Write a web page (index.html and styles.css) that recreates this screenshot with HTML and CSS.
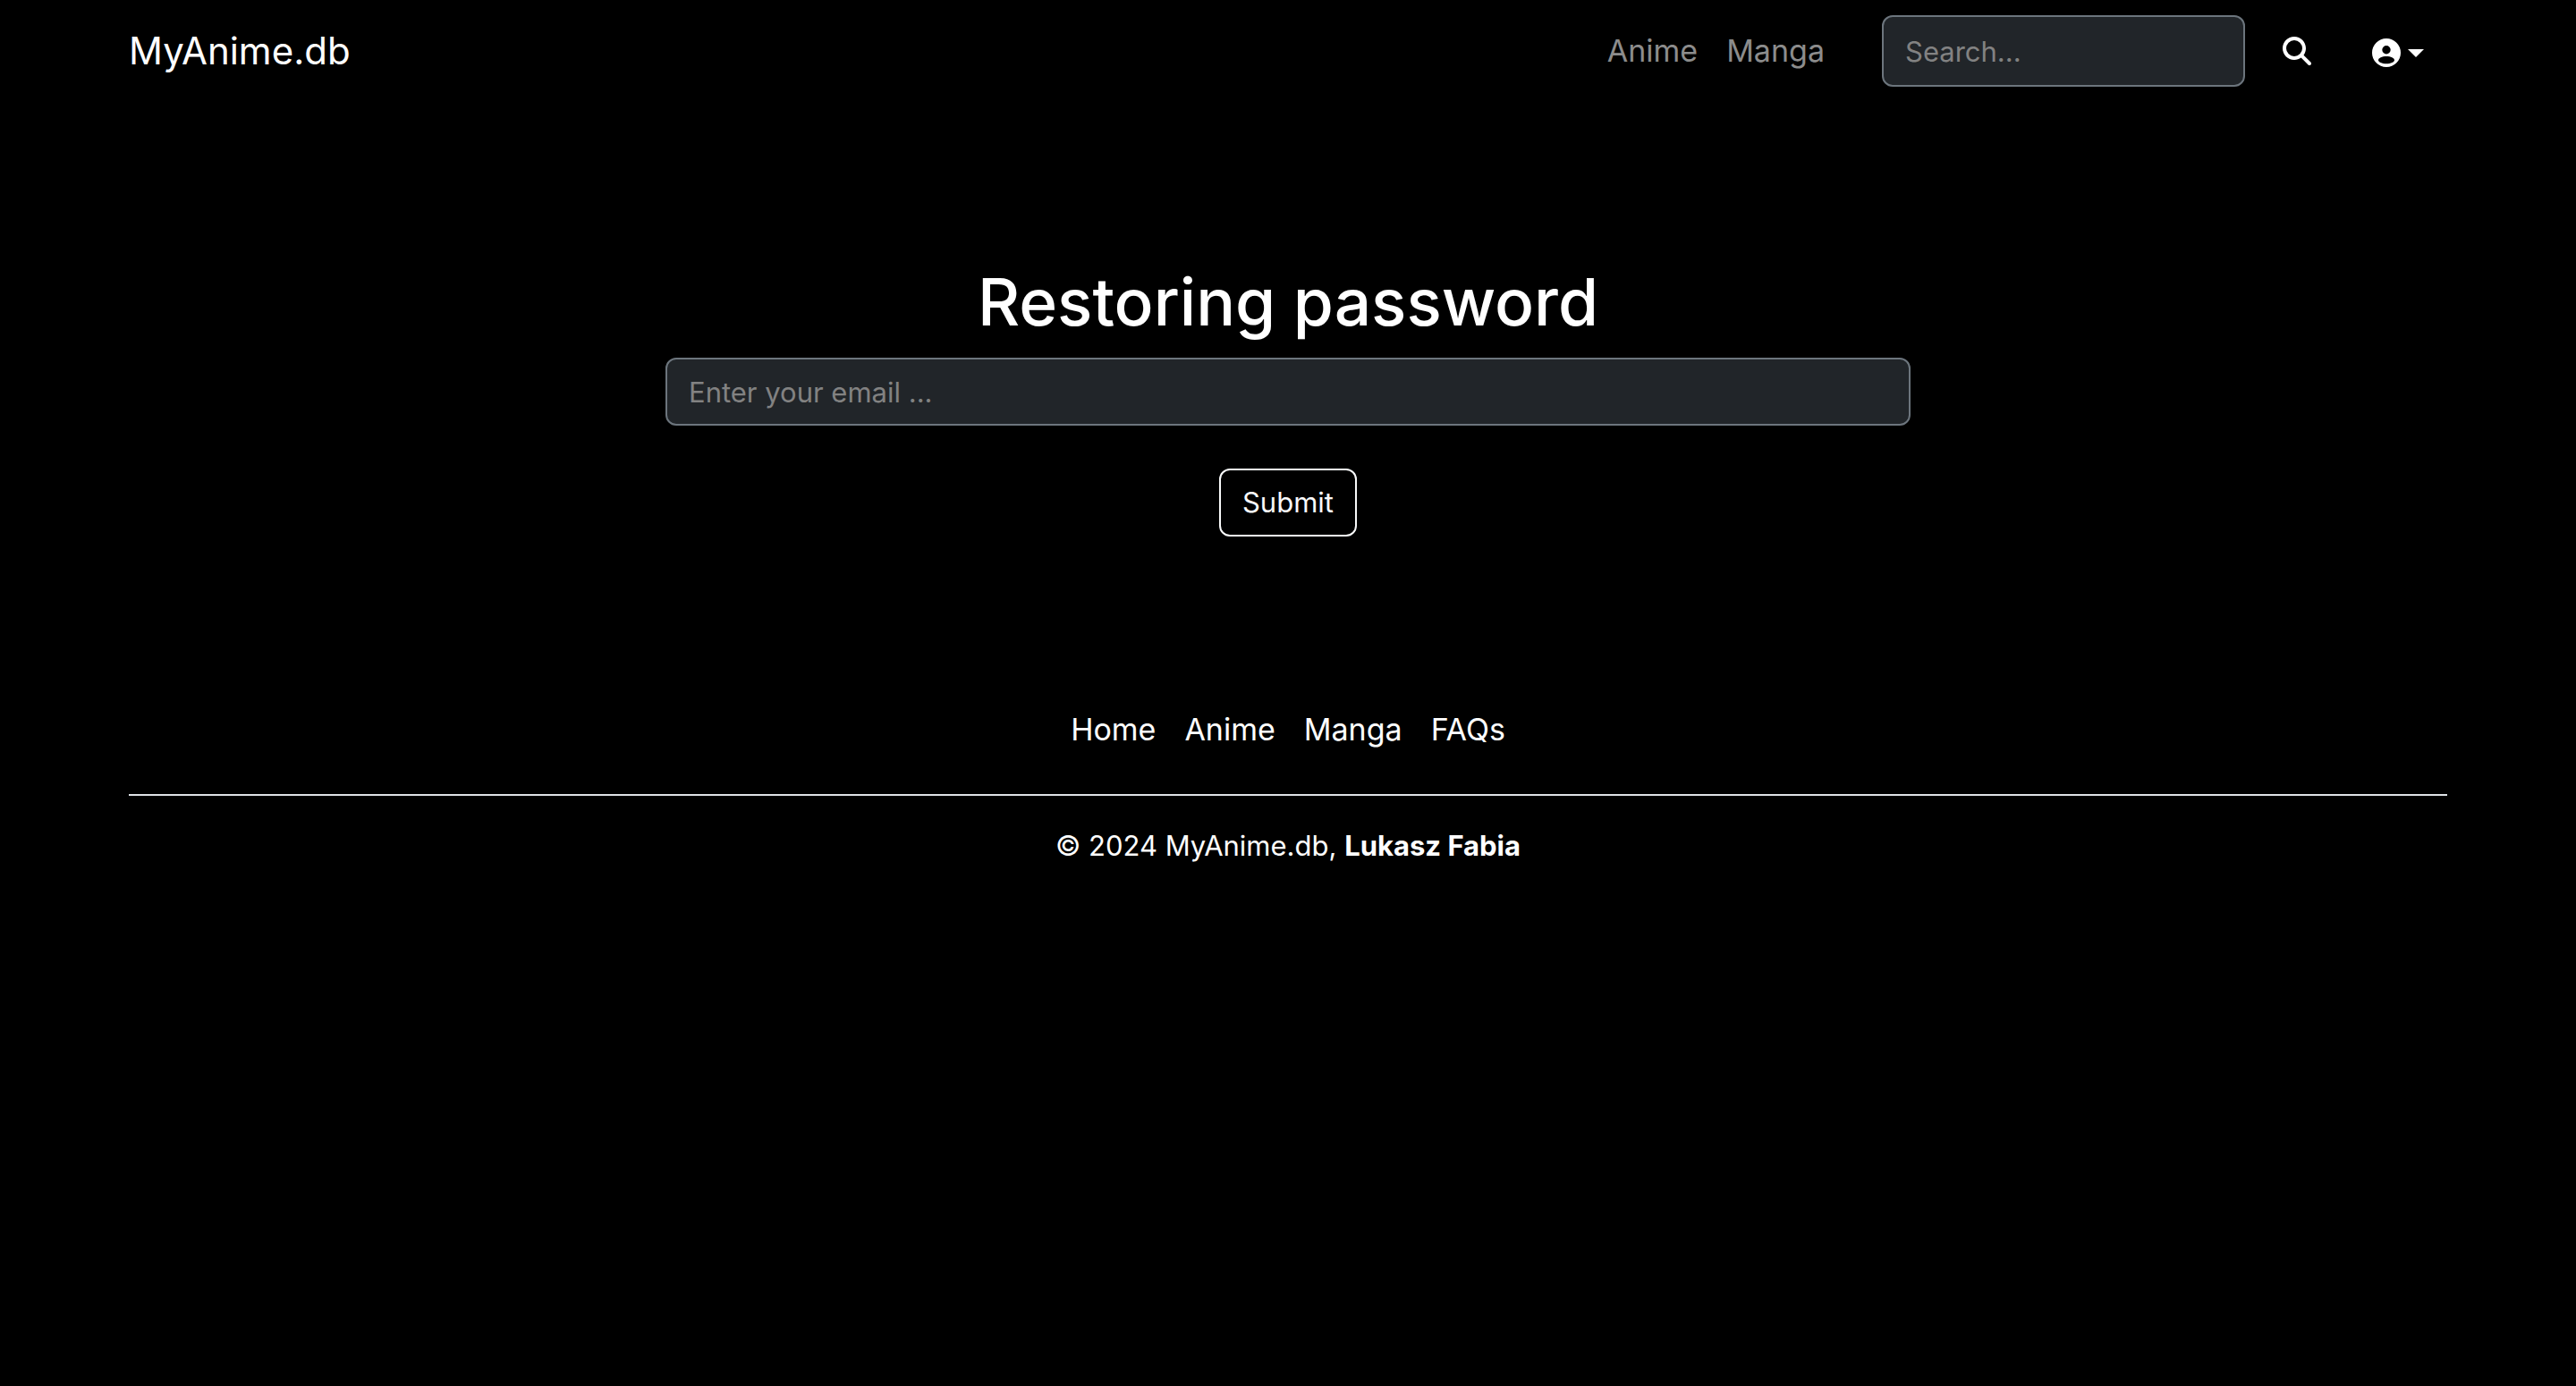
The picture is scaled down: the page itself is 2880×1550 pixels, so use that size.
FILE: index.html
```html
<!DOCTYPE html>
<html lang="en">
<head>
  <meta charset="utf-8">
  <meta name="viewport" content="width=device-width, initial-scale=1">
  <title>MyAnime.db</title>
  <link rel="stylesheet" href="styles.css">
</head>
<body>
  <header class="navbar">
    <a class="brand" href="#">MyAnime.db</a>
    <nav class="nav-links" aria-label="Main">
      <a href="#">Anime</a>
      <a href="#">Manga</a>
    </nav>
    <form class="search">
      <input class="field search-field" type="search" placeholder="Search..." aria-label="Search">
      <button class="icon-button" type="submit" aria-label="Search">
        <svg class="icon" viewBox="0 0 512 512" aria-hidden="true"><path d="M416 208c0 45.900-14.900 88.300-40 122.700L502.600 457.400c12.500 12.500 12.500 32.800 0 45.300s-32.800 12.500-45.300 0L330.700 376c-34.400 25.200-76.800 40-122.700 40C93.100 416 0 322.900 0 208S93.100 0 208 0S416 93.100 416 208zM208 352a144 144 0 1 0 0-288 144 144 0 1 0 0 288z"/></svg>
      </button>
    </form>
    <button class="account" type="button" aria-label="Account" aria-haspopup="true">
      <svg class="icon" viewBox="0 0 32 32" aria-hidden="true"><path fill-rule="evenodd" d="M16 0a16 16 0 1 0 0 32a16 16 0 1 0 0-32zM16 8a4.700 4.700 0 1 1 0 9.400a4.700 4.700 0 1 1 0-9.400zM16 20c5 0 9 2 9 4.200c0 2-4 4-9 4s-9-2-9-4c0-2.200 4-4.200 9-4.200z"/></svg>
      <span class="caret"></span>
    </button>
  </header>

  <main class="restore">
    <h1 class="title">Restoring password</h1>
    <form class="restore-form">
      <input class="field" type="email" placeholder="Enter your email ..." aria-label="Email">
      <button class="submit" type="submit">Submit</button>
    </form>
  </main>

  <footer class="footer">
    <nav class="footer-links" aria-label="Footer">
      <a href="#">Home</a>
      <a href="#">Anime</a>
      <a href="#">Manga</a>
      <a href="#">FAQs</a>
    </nav>
    <p class="copyright">© 2024 MyAnime.db, <strong>Lukasz Fabia</strong></p>
  </footer>
</body>
</html>
```
FILE: styles.css
```css
* {
  box-sizing: border-box;
}

body {
  margin: 0;
  background: #000;
  color: #fff;
  font-family: Inter, "Liberation Sans", sans-serif;
  font-size: 31px;
  line-height: 48px;
}

a {
  color: inherit;
  text-decoration: none;
}

button,
input {
  font: inherit;
}

.navbar {
  display: flex;
  align-items: center;
  padding: 17px 5%;
}

.brand {
  margin-right: auto;
  font-size: 42px;
}

.nav-links {
  display: flex;
  gap: 32px;
  margin-right: 64px;
  color: #8c8c8c;
  font-size: 34px;
}

.search {
  display: flex;
  align-items: center;
  gap: 16px;
}

.field {
  width: 100%;
  height: 76px;
  padding: 0 24px;
  border: 2px solid #6c757d;
  border-radius: 12px;
  background: #212529;
  color: #fff;
  appearance: none;
}

.field::placeholder {
  color: #828282;
  opacity: 1;
}

.search-field {
  width: 406px;
  height: 80px;
}

.icon-button,
.account {
  display: flex;
  align-items: center;
  padding: 24px 26px;
  border: 0;
  background: transparent;
  color: #fff;
}

.account {
  gap: 8px;
  margin-left: 16px;
  padding: 24px 26px 20px;
}

.icon {
  display: block;
  width: 32px;
  height: 32px;
  fill: currentColor;
}

.caret {
  border: 9px solid transparent;
  border-top-color: currentColor;
  border-bottom: 0;
}

.restore {
  padding: 176px calc(25% + 24px) 192px;
}

.title {
  margin: 0 0 14px;
  font-size: 73px;
  font-weight: 500;
  line-height: 96px;
  text-align: center;
}

.restore-form {
  display: flex;
  flex-direction: column;
  align-items: center;
  gap: 48px;
}

.submit {
  height: 76px;
  padding: 0 24px;
  border: 2px solid #f8f9fa;
  border-radius: 12px;
  background: transparent;
  color: #f8f9fa;
}

.footer {
  margin: 0 5%;
  text-align: center;
}

.footer-links {
  display: flex;
  justify-content: center;
  gap: 32px;
  padding-bottom: 48px;
  border-bottom: 2px solid #dee2e6;
  font-size: 34px;
}

.copyright {
  margin: 32px 0;
}
```
